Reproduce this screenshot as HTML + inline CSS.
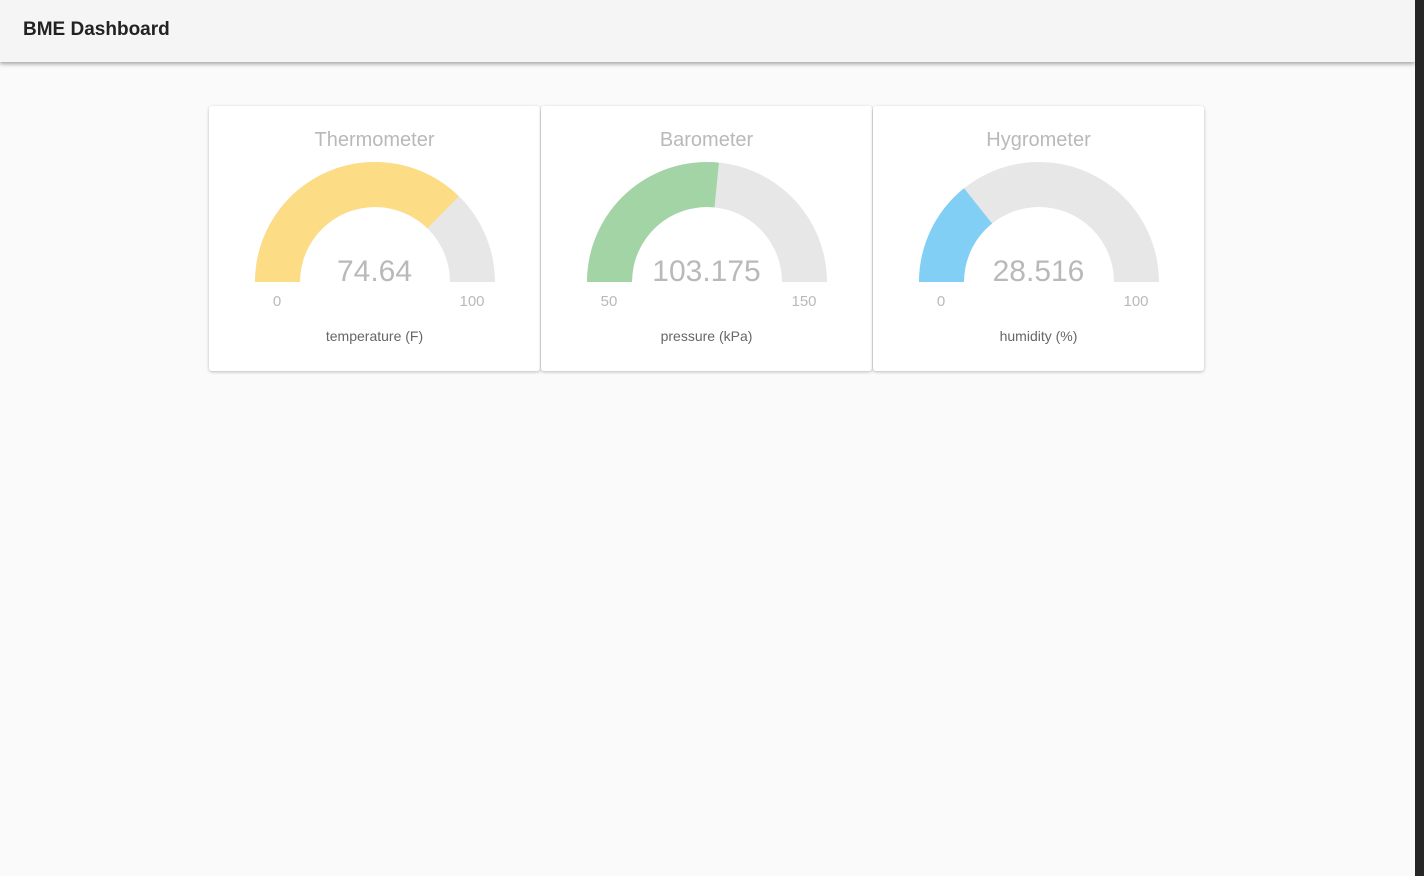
<!DOCTYPE html>
<html><head><meta charset="utf-8"><style>
body{margin:0;width:1424px;height:876px;background:#fafafa;font-family:"Liberation Sans",sans-serif;position:relative;overflow:hidden}
.bar{position:absolute;left:0;top:0;width:1415px;height:62px;background:#f5f5f5;box-shadow:0 2px 4px rgba(0,0,0,.35)}
.bar span{position:absolute;left:23px;top:19px;font-size:19px;font-weight:bold;color:#222}
.strip{position:absolute;left:1415px;top:0;width:9px;height:876px;background:#262626}
.card{position:absolute;top:106px;width:331px;height:265px;background:#fff;border-radius:3px;box-shadow:0 1px 3px rgba(0,0,0,.25)}
.t{position:absolute;top:23px;width:100%;text-align:center;font-size:20px;color:#b9b9b9}
.g{position:absolute;left:46px;top:56px}
.v{position:absolute;top:149px;width:100%;text-align:center;font-size:30px;color:#b9b9b9}
.mn,.mx{position:absolute;top:187px;font-size:15px;color:#b9b9b9;width:60px;text-align:center}
.mn{left:38px}.mx{left:233px}
.l{position:absolute;top:222px;width:100%;text-align:center;font-size:14px;color:#666}
</style></head><body>
<div class="bar"><span>BME Dashboard</span></div>
<div class="strip"></div>

<div class="card" style="left:209px">
<div class="t">Thermometer</div>
<svg class="g" width="240" height="121"><path d="M0 120A120 120 0 0 1 240 120L195 120A75 75 0 0 0 45 120Z" fill="#e8e7e7"/><path d="M0 120A120 120 0 0 1 203.9 34.2L172.4 66.4A75 75 0 0 0 45 120Z" fill="#fddc86"/></svg>
<div class="v">74.64</div><div class="mn">0</div><div class="mx">100</div>
<div class="l">temperature (F)</div></div>

<div class="card" style="left:541px">
<div class="t">Barometer</div>
<svg class="g" width="240" height="121"><path d="M0 120A120 120 0 0 1 240 120L195 120A75 75 0 0 0 45 120Z" fill="#e8e7e7"/><path d="M0 120A120 120 0 0 1 131.9 0.6L127.5 45.4A75 75 0 0 0 45 120Z" fill="#a3d4a5"/></svg>
<div class="v">103.175</div><div class="mn">50</div><div class="mx">150</div>
<div class="l">pressure (kPa)</div></div>

<div class="card" style="left:873px">
<div class="t">Hygrometer</div>
<svg class="g" width="240" height="121"><path d="M0 120A120 120 0 0 1 240 120L195 120A75 75 0 0 0 45 120Z" fill="#e8e7e7"/><path d="M0 120A120 120 0 0 1 45 26.3L73.1 61.5A75 75 0 0 0 45 120Z" fill="#81cff4"/></svg>
<div class="v">28.516</div><div class="mn">0</div><div class="mx">100</div>
<div class="l">humidity (%)</div></div>
</body></html>
